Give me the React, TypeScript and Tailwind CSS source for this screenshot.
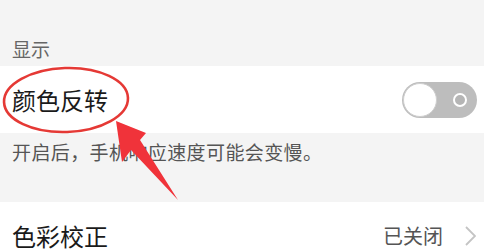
import React from "react";

const font = { fontFamily: '"Noto Sans CJK SC", "Noto Sans", sans-serif' };

export default function App() {
  return (
    <div className="relative w-[484px] h-[249px] overflow-hidden bg-[#f4f4f4]" style={font}>
      <div className="h-[66px] px-[12px] pt-[37px]">
        <div className="text-[19px] leading-[24px] text-[#666]">显示</div>
      </div>
      <div className="h-[67px] bg-white flex items-center justify-between pl-[12px] pr-[7px]">
        <div className="text-[24px] leading-[30px] text-[#1a1a1a]">颜色反转</div>
        <div className="w-[75px] h-[36px] rounded-full bg-[#bdbdbd] flex items-center justify-between pl-[1px] pr-[10px]">
          <div className="w-[34px] h-[34px] rounded-full bg-white border border-[#cfcfcf]" />
          <div className="w-[14px] h-[14px] rounded-full border-[2px] border-white bg-[#b5b5b5]" />
        </div>
      </div>
      <div className="h-[69px] px-[12px] pt-[7px]">
        <div className="text-[19px] leading-[24px] text-[#555] tracking-[0.4px]">开启后，手机响应速度可能会变慢。</div>
      </div>
      <div className="h-[67px] bg-white flex items-center justify-between pl-[12px] pr-[8px]">
        <div className="text-[24px] leading-[30px] text-[#1a1a1a]">色彩校正</div>
        <div className="flex items-center gap-[22px]">
          <div className="text-[20px] leading-[26px] text-[#555]">已关闭</div>
          <svg width="11" height="20" viewBox="0 0 11 20">
            <polyline points="1,1 10,10 1,19" fill="none" stroke="#c4c4c4" strokeWidth="1.8" />
          </svg>
        </div>
      </div>
      <svg className="absolute inset-0 pointer-events-none" width="484" height="249" viewBox="0 0 484 249">
        <ellipse cx="66" cy="100" rx="62" ry="32" fill="none" stroke="#e53935" strokeWidth="2.6" transform="rotate(-2 66 100)" />
        <polygon points="116,121 146,133 140,140 178,200 131,150 122,162" fill="#f0333a" />
      </svg>
    </div>
  );
}
